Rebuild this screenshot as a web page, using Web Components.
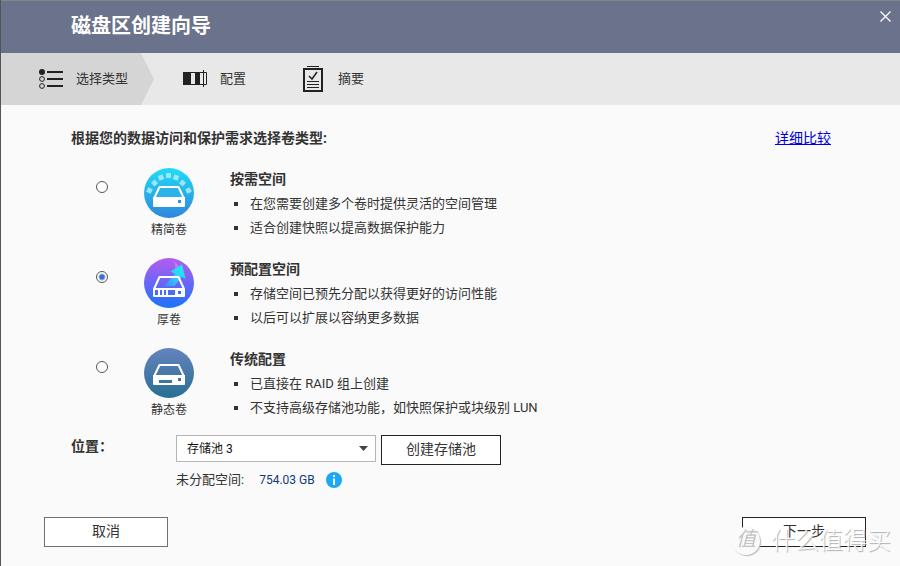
<!DOCTYPE html>
<html lang="zh-CN">
<head>
<meta charset="utf-8">
<meta name="viewport" content="width=device-width, initial-scale=1">
<title>磁盘区创建向导</title>
<style>
    body {
        margin: 0;
        font-family: Roboto, "Noto Sans CJK SC", sans-serif;
        font-size: 13px;
        color: #333;
        background-color: #fafafa;
    }
</style>
</head>
<body>
<volume-wizard></volume-wizard>

<script>
const icons = {
    list: `
        <svg width="24" height="24" viewBox="0 0 24 24" fill="none" stroke="#222">
            <circle cx="3" cy="5" r="3" fill="#222" stroke="none"/>
            <circle cx="3" cy="12" r="2.4"/>
            <circle cx="3" cy="19" r="2.4"/>
            <path d="M8 5h16M8 12h16M8 19h16" stroke-width="2"/>
        </svg>`,
    config: `
        <svg width="24" height="24" viewBox="0 0 24 24" fill="none" stroke="#222">
            <path d="M.5 5.500h23v12h-23z"/>
            <path d="M0 5h8v13H0zM12 5h5v13h-5z" fill="#222" stroke="none"/>
            <path d="M20.500 3v17"/>
        </svg>`,
    summary: `
        <svg width="24" height="26" viewBox="0 0 24 26" fill="none" stroke="#222">
            <path d="M6 .5h12"/>
            <path d="M3 3h18v22H3z" stroke-width="2"/>
            <path d="M8 10l3 3 5-7" stroke-width="1.500"/>
            <path d="M6 15.500h12M6 18.500h12M6 21.500h12"/>
        </svg>`,
    thin: `
        <svg width="50" height="50" viewBox="0 0 50 50">
            <defs><linearGradient id="g" x2="0" y2="1"><stop stop-color="#1fdcf6"/><stop offset="1" stop-color="#2f86dc"/></linearGradient></defs>
            <circle cx="25" cy="25" r="25" fill="url(#g)"/>
            <g fill="#9be6fa">
                <path d="M22 5h5v5h-5z"/>
                <path d="M-2.500-2.500h5v5h-5z" transform="translate(17 9.500) rotate(-20)"/>
                <path d="M-2.500-2.500h5v5h-5z" transform="translate(10.500 15) rotate(-42)"/>
                <path d="M-2.500-2.500h5v5h-5z" transform="translate(5.500 22.500) rotate(-65)"/>
                <path d="M-2.500-2.500h5v5h-5z" transform="translate(32 9.500) rotate(20)"/>
                <path d="M-2.500-2.500h5v5h-5z" transform="translate(38.500 15) rotate(42)"/>
                <path d="M-2.500-2.500h5v5h-5z" transform="translate(44.500 22.500) rotate(65)"/>
            </g>
            <path d="M15.500 19h19l5.500 11.500H10z" fill="#2cb4e9" stroke="#fff" stroke-width="2" stroke-linejoin="round"/>
            <path d="M9 29h32v9q0 1-1 1H10q-1 0-1-1z" fill="#fff"/>
            <path d="M34 32h3v3h-3z" fill="#299be0"/>
        </svg>`,
    thick: `
        <svg width="50" height="50" viewBox="0 0 50 50">
            <defs>
                <linearGradient id="g" x2="0" y2="1"><stop stop-color="#b65cf0"/><stop offset=".5" stop-color="#6966f5"/><stop offset="1" stop-color="#1975fa"/></linearGradient>
                <linearGradient id="a" x1="1" x2="0" y2="1"><stop stop-color="#19f0f4"/><stop offset=".5" stop-color="#2ed2f5"/><stop offset="1" stop-color="#4b80f7"/></linearGradient>
            </defs>
            <circle cx="25" cy="25" r="25" fill="url(#g)"/>
            <path d="M30 3q7 5 5 13l-4-2q1-6-1-11z" fill="#c07af3"/>
            <path d="M38 6.500l3.500 14-4-1.500-7 9H20l11-12-4.500-2.500z" fill="url(#a)"/>
            <path d="M15.500 19h19l5.500 12H10zM10 31h30v7H10z" fill="none" stroke="#fff" stroke-width="2" stroke-linejoin="round"/>
            <path d="M15 32v5M19 32v5M23 32v5" stroke="#fff" stroke-width="2"/>
            <path d="M31 31h9v7h-9z" fill="#fff"/>
            <path d="M34 33h3v3h-3z" fill="#3670f8"/>
        </svg>`,
    fixed: `
        <svg width="50" height="50" viewBox="0 0 50 50">
            <defs><linearGradient id="g" x2="0" y2="1"><stop stop-color="#6583bd"/><stop offset="1" stop-color="#286f93"/></linearGradient></defs>
            <circle cx="25" cy="25" r="25" fill="url(#g)"/>
            <path d="M15.500 17h19l5.500 11.500H10z" fill="none" stroke="#fff" stroke-width="2" stroke-linejoin="round"/>
            <path d="M9 27h32v9q0 1-1 1H10q-1 0-1-1z" fill="#fff"/>
            <path d="M15 32h13v3H15zM34 30h3v3h-3z" fill="#42739f"/>
        </svg>`
};

class WizardHeader extends HTMLElement {
    constructor() {
        super();
        this.attachShadow({ mode: 'open' });
    }

    connectedCallback() {
        this.shadowRoot.innerHTML = `
            <style>
                :host {
                    display: flex;
                    justify-content: space-between;
                    align-items: flex-start;
                    box-sizing: border-box;
                    height: 53px;
                    padding: 0 8px 0 70px;
                    border-top: 1px solid #85868c;
                    background-color: #6b728b;
                    color: white;
                }
                h1 {
                    margin: 0;
                    font-size: 20px;
                    line-height: 50px;
                }
                button {
                    display: flex;
                    margin-top: 9px;
                    padding: 0;
                    border: 0;
                    background: none;
                    cursor: pointer;
                }
            </style>
            <h1><slot></slot></h1>
            <button type="button" aria-label="关闭">
                <svg width="13" height="13" viewBox="0 0 13 13" stroke="white" stroke-width="1.300"><path d="M1.500 1.500l10 10M11.500 1.500l-10 10"/></svg>
            </button>
        `;
    }
}

class WizardStep extends HTMLElement {
    constructor() {
        super();
        this.attachShadow({ mode: 'open' });
    }

    connectedCallback() {
        this.shadowRoot.innerHTML = `
            <style>
                :host {
                    display: flex;
                    align-items: center;
                    gap: 13px;
                    padding-right: 55px;
                }
                :host([active]) {
                    padding-left: 38px;
                    padding-right: 26px;
                    margin-right: 29px;
                    background-color: #d5d5d5;
                    clip-path: polygon(0 0, calc(100% - 13px) 0, 100% 50%, calc(100% - 13px) 100%, 0 100%);
                }
                svg { display: block; }
                span { padding-bottom: 4px; }
            </style>
            ${icons[this.getAttribute('icon')]}
            <span><slot></slot></span>
        `;
    }
}

class WizardSteps extends HTMLElement {
    constructor() {
        super();
        this.attachShadow({ mode: 'open' });
    }

    connectedCallback() {
        this.shadowRoot.innerHTML = `
            <style>
                :host {
                    display: flex;
                    height: 52px;
                    background-color: #e8e8e8;
                }
            </style>
            <slot></slot>
        `;
    }
}

class VolumeOption extends HTMLElement {
    constructor() {
        super();
        this.attachShadow({ mode: 'open' });
    }

    connectedCallback() {
        this.render();
        this.radio = this.shadowRoot.querySelector('input');
        this.radio.checked = this.hasAttribute('checked');
        this.radio.addEventListener('change', () => {
            this.dispatchEvent(new CustomEvent('pick', { bubbles: true }));
        });
    }

    render() {
        this.shadowRoot.innerHTML = `
            <style>
                :host {
                    display: grid;
                    grid-template-columns: 12px 50px 1fr;
                    column-gap: 36px;
                    padding-left: 25px;
                    line-height: 24px;
                }
                input {
                    appearance: none;
                    width: 12px;
                    height: 12px;
                    margin: 14px 0 0;
                    border: 1px solid #555;
                    border-radius: 50%;
                    background-color: white;
                }
                input:checked {
                    background: radial-gradient(circle, #3a6fd0 2px, white 4px);
                }
                label {
                    display: flex;
                    flex-direction: column;
                    align-items: center;
                    gap: 4px;
                    padding-top: 1px;
                    font-size: 12px;
                    line-height: 16px;
                }
                h2 {
                    margin: 0;
                    font-size: 14px;
                }
                svg { display: block; }
            </style>
            <input type="radio" id="volume">
            <label for="volume">${icons[this.getAttribute('icon')]}<span>${this.getAttribute('label')}</span></label>
            <div>
                <h2>${this.getAttribute('heading')}</h2>
                <slot></slot>
            </div>
        `;
    }
}

class VolumePoint extends HTMLElement {
    constructor() {
        super();
        this.attachShadow({ mode: 'open' });
    }

    connectedCallback() {
        this.shadowRoot.innerHTML = `
            <style>
                :host {
                    display: flex;
                    align-items: center;
                    gap: 12px;
                    box-sizing: border-box;
                    height: 24px;
                    padding: 2px 0 0 4px;
                }
                :host::before {
                    content: "";
                    width: 4px;
                    height: 4px;
                    background-color: #333;
                }
            </style>
            <span><slot></slot></span>
        `;
    }
}

class PoolForm extends HTMLElement {
    constructor() {
        super();
        this.attachShadow({ mode: 'open' });
    }

    connectedCallback() {
        this.shadowRoot.innerHTML = `
            <style>
                :host {
                    display: grid;
                    grid-template-columns: 105px 1fr;
                    row-gap: 5px;
                    line-height: 20px;
                }
                label {
                    font-size: 14px;
                    font-weight: bold;
                    line-height: 22px;
                }
                .row {
                    display: flex;
                    align-items: flex-start;
                    gap: 5px;
                }
                .select { display: grid; }
                .select > * { grid-area: 1 / 1; }
                .select svg {
                    align-self: center;
                    justify-self: end;
                    margin-right: 8px;
                    pointer-events: none;
                }
                select {
                    appearance: none;
                    width: 200px;
                    height: 27px;
                    padding: 0 10px;
                    border: 1px solid #b5b5b5;
                    border-radius: 0;
                    background-color: white;
                    color: #111;
                    font: inherit;
                    font-size: 12px;
                }
                .free {
                    grid-column: 2;
                    display: flex;
                    align-items: center;
                }
                .free b {
                    margin: 0 11px 0 15px;
                    color: #103b7c;
                    font-size: 12px;
                    font-weight: normal;
                }
            </style>
            <label for="pool">位置：</label>
            <div class="row">
                <div class="select">
                    <select id="pool"><option>存储池 3</option></select>
                    <svg width="9" height="5" viewBox="0 0 9 5"><path d="M0 0h9L4.500 5z" fill="#444"/></svg>
                </div>
                <wizard-button size="120">创建存储池</wizard-button>
            </div>
            <div class="free">
                <span>未分配空间:</span><b>754.03 GB</b>
                <svg width="16" height="16" viewBox="0 0 16 16"><circle cx="8" cy="8" r="8" fill="#1ba8f5"/><path d="M7 3h2v2H7zM7 6.500h2V13H7z" fill="#fff"/></svg>
            </div>
        `;
    }
}

class WizardButton extends HTMLElement {
    constructor() {
        super();
        this.attachShadow({ mode: 'open' });
    }

    connectedCallback() {
        this.shadowRoot.innerHTML = `
            <style>
                :host {
                    display: block;
                    --line: #222;
                }
                :host([muted]) { --line: #707070; }
                button {
                    display: block;
                    width: 124px;
                    height: 30px;
                    padding: 0 0 2px;
                    border: 1px solid var(--line);
                    background-color: white;
                    color: #333;
                    font: inherit;
                    font-size: 14px;
                    line-height: 26px;
                    cursor: pointer;
                }
                :host([size="120"]) button { width: 120px; }
            </style>
            <button type="button"><slot></slot></button>
        `;
    }
}

class SiteMark extends HTMLElement {
    constructor() {
        super();
        this.attachShadow({ mode: 'open' });
    }

    connectedCallback() {
        this.shadowRoot.innerHTML = `
            <style>
                :host {
                    position: absolute;
                    right: 9px;
                    bottom: 10px;
                    display: flex;
                    align-items: center;
                    gap: 11px;
                    color: #fdfdfd;
                    font-size: 24px;
                    font-weight: 300;
                    line-height: 30px;
                    text-shadow: 1px 1px 1px #aaa;
                    pointer-events: none;
                }
                .logo {
                    width: 28px;
                    height: 28px;
                    border-radius: 50%;
                    background-color: #fafafa;
                    box-shadow: 1px 1px 1px #bbb;
                    color: #c4c4c4;
                    font-size: 20px;
                    font-style: italic;
                    font-weight: 400;
                    line-height: 25px;
                    text-align: center;
                    text-shadow: none;
                }
            </style>
            <span class="logo">值</span>
            <span>什么值得买</span>
        `;
    }
}

class VolumeWizard extends HTMLElement {
    constructor() {
        super();
        this.attachShadow({ mode: 'open' });
    }

    connectedCallback() {
        this.render();
        this.script();
    }

    // radios live in separate shadow roots, so the group is kept in sync here
    script() {
        const options = this.shadowRoot.querySelectorAll('volume-option');

        this.shadowRoot.addEventListener('pick', (e) => {
            options.forEach((option) => {
                option.radio.checked = option === e.target;
            });
        });
    }

    render() {
        this.shadowRoot.innerHTML = `
            <style>
                :host {
                    position: relative;
                    display: flex;
                    flex-direction: column;
                    box-sizing: border-box;
                    min-height: 100vh;
                    border-left: 1px solid #555;
                }
                main { padding: 23px 69px 20px 70px; }
                .lead {
                    display: flex;
                    justify-content: space-between;
                    margin-bottom: 19px;
                    font-size: 14px;
                    line-height: 20px;
                }
                .lead p {
                    margin: 0;
                    font-weight: bold;
                }
                .lead a { color: #0000dd; }
                .options {
                    display: grid;
                    gap: 18px;
                    margin-bottom: 16px;
                }
                footer {
                    display: flex;
                    justify-content: space-between;
                    margin-top: auto;
                    padding: 0 34px 19px 43px;
                }
            </style>
            <wizard-header>磁盘区创建向导</wizard-header>
            <wizard-steps>
                <wizard-step icon="list" active>选择类型</wizard-step>
                <wizard-step icon="config">配置</wizard-step>
                <wizard-step icon="summary">摘要</wizard-step>
            </wizard-steps>
            <main>
                <div class="lead">
                    <p>根据您的数据访问和保护需求选择卷类型:</p>
                    <a href="#compare">详细比较</a>
                </div>
                <div class="options">
                    <volume-option icon="thin" label="精简卷" heading="按需空间">
                        <volume-point>在您需要创建多个卷时提供灵活的空间管理</volume-point>
                        <volume-point>适合创建快照以提高数据保护能力</volume-point>
                    </volume-option>
                    <volume-option icon="thick" label="厚卷" heading="预配置空间" checked>
                        <volume-point>存储空间已预先分配以获得更好的访问性能</volume-point>
                        <volume-point>以后可以扩展以容纳更多数据</volume-point>
                    </volume-option>
                    <volume-option icon="fixed" label="静态卷" heading="传统配置">
                        <volume-point>已直接在 RAID 组上创建</volume-point>
                        <volume-point>不支持高级存储池功能，如快照保护或块级别 LUN</volume-point>
                    </volume-option>
                </div>
                <pool-form></pool-form>
            </main>
            <footer>
                <wizard-button muted>取消</wizard-button>
                <wizard-button>下一步</wizard-button>
            </footer>
            <site-mark></site-mark>
        `;
    }
}

customElements.define('wizard-header', WizardHeader);
customElements.define('wizard-step', WizardStep);
customElements.define('wizard-steps', WizardSteps);
customElements.define('volume-option', VolumeOption);
customElements.define('volume-point', VolumePoint);
customElements.define('wizard-button', WizardButton);
customElements.define('pool-form', PoolForm);
customElements.define('site-mark', SiteMark);
customElements.define('volume-wizard', VolumeWizard);
</script>
</body>
</html>
